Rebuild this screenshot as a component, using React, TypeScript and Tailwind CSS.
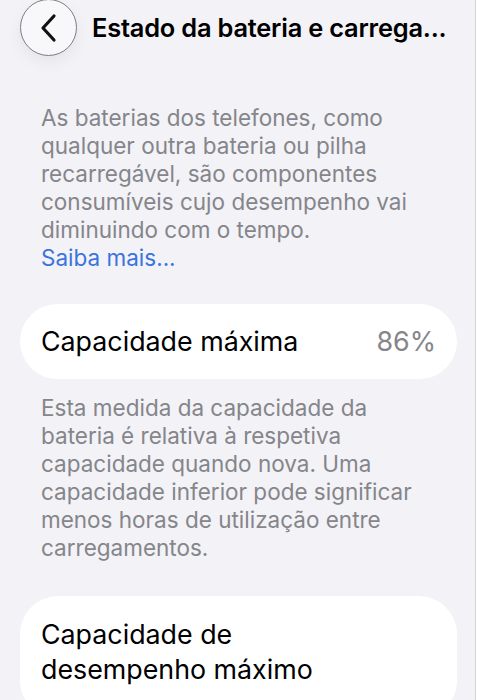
import React from 'react';

const BackButton = () => (
  <button className="w-[57px] h-[57px] -mt-px rounded-full bg-[#f8f8fa] border border-[#7d7d82] shadow-[0_6px_16px_rgba(0,0,0,0.06)] flex items-center justify-center shrink-0">
    <svg width="24" height="30" viewBox="0 0 24 30" fill="none">
      <path d="M17 3 L6 15 L17 27" stroke="#111" strokeWidth="3.2" strokeLinecap="round" strokeLinejoin="round" />
    </svg>
  </button>
);

const App = () => {
  return (
    <div className="min-h-[700px] bg-white flex" style={{ fontFamily: 'Inter, "Noto Sans", sans-serif' }}>
      <div className="w-[476px] min-h-[700px] bg-[#f2f2f7] border-r border-[#d4d4d8] overflow-hidden">
        {/* Header */}
        <div className="flex items-center h-[56px] pl-5 gap-[15px]">
          <BackButton />
          <h1 className="text-[25.4px] font-semibold text-black tracking-[-0.2px] whitespace-nowrap">
            Estado da bateria e carrega...
          </h1>
        </div>

        {/* Intro */}
        <div className="mt-[48px] px-[41px] text-[22.5px] leading-[28px] text-[#85858a]">
          <p>
            As baterias dos telefones, como qualquer outra bateria ou pilha recarregável, são componentes consumíveis cujo desempenho vai diminuindo com o tempo.
          </p>
          <p className="text-[#3b74dc]">Saiba mais...</p>
        </div>

        {/* Capacidade máxima */}
        <div className="mt-[32px] mx-5 w-[437px] h-[75px] bg-white rounded-[38px] px-[21px] flex items-center justify-between">
          <span className="text-[26.8px] text-black">Capacidade máxima</span>
          <span className="text-[26.8px] text-[#85858a]">86%</span>
        </div>

        <p className="mt-[15px] px-[41px] text-[22.5px] leading-[28px] text-[#85858a]">
          Esta medida da capacidade da bateria é relativa à respetiva capacidade quando nova. Uma capacidade inferior pode significar menos horas de utilização entre carregamentos.
        </p>

        {/* Desempenho */}
        <div className="mt-[34px] mx-5 w-[437px] bg-white rounded-[38px] px-[21px] pt-[21px] pb-8">
          <p className="text-[26.8px] leading-[35px] text-black">
            Capacidade de
            <br />
            desempenho máximo
          </p>
        </div>
      </div>
    </div>
  );
};

export default App;
